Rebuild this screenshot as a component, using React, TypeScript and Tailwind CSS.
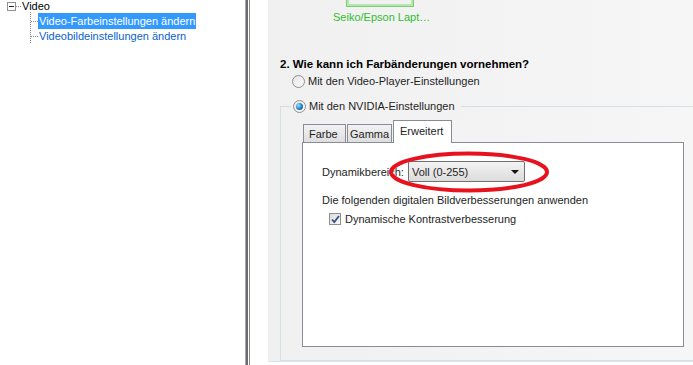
const FONT = "font-['Liberation_Sans',Arial,sans-serif]";

function Radio({ checked }: { checked?: boolean }) {
  return (
    <span className="flex h-[13px] w-[13px] shrink-0 items-center justify-center rounded-full border border-[#8e8f8f] bg-gradient-to-br from-[#e6e6e6] to-[#fbfbfb]">
      {checked && (
        <span className="h-[7px] w-[7px] rounded-full bg-[radial-gradient(circle_at_35%_35%,#9ee0ff,#1b7fc4_55%,#0c4a80)]" />
      )}
    </span>
  );
}

function TreePane() {
  return (
    <div className="relative w-[245px] shrink-0 bg-white">
      <div className="flex h-[12px] items-center pl-[7px]">
        <span className="flex h-[9px] w-[9px] items-center justify-center border border-[#919191] bg-white">
          <span className="h-px w-[5px] bg-[#222]" />
        </span>
        <span className="w-[5px] border-t border-dotted border-[#888]" />
        <span className="ml-[1px] text-black">Video</span>
      </div>
      <div className="ml-[30px] flex">
        <div className="w-[8px] border-l border-dotted border-[#888]">
          <div className="mt-[9px] h-[15px] border-t border-dotted border-[#888]" />
          <div className="h-px border-t border-dotted border-[#888]" />
        </div>
        <div className="flex flex-col">
          <span className="mt-[1px] flex h-[16px] items-center bg-[#3399ff] px-[1px] text-white">Video-Farbeinstellungen ändern</span>
          <span className="px-[1px] text-[#0a5fc9]">Videobildeinstellungen ändern</span>
        </div>
      </div>
    </div>
  );
}

function TabPanel() {
  return (
    <div className="ml-[21px] mt-[13px] w-[382px]">
      <div className="flex h-[22px] items-end pl-px">
        <div className="flex h-[18px] w-[43px] items-center border border-b-0 border-[#898c95] bg-gradient-to-b from-[#f2f2f2] to-[#dedede] pl-[5px]">Farbe</div>
        <div className="ml-px flex h-[18px] w-[45px] items-center border border-b-0 border-[#898c95] bg-gradient-to-b from-[#f2f2f2] to-[#dedede] pl-[2px]">Gamma</div>
        <div className="relative z-10 -mb-px ml-px flex h-[23px] w-[59px] items-start border border-b-0 border-[#898c95] bg-white pl-[6px] pt-[3px]">Erweitert</div>
      </div>
      <div className="relative h-[205px] border border-[#898c95] bg-white pl-[19px]">
        <div className="mt-[18px] flex items-center">
          <span className="w-[86px]">Dynamikbereich:</span>
          <div className="flex h-[21px] w-[117px] items-center justify-between rounded-[2px] border border-[#707070] bg-gradient-to-b from-[#f3f3f3] to-[#dcdcdc] pl-[3px] pr-[5px]">
            <span>Voll (0-255)</span>
            <svg width="8" height="4" viewBox="0 0 8 4"><path d="M0 0h8L4 4z" fill="#111" /></svg>
          </div>
        </div>
        <div className="mt-[11px]">Die folgenden digitalen Bildverbesserungen anwenden</div>
        <div className="ml-[7px] mt-[5px] flex items-center gap-[4px]">
          <span className="flex h-[12px] w-[12px] items-center justify-center border border-[#8e8f8f] bg-gradient-to-br from-[#dcdcdc] to-[#f8f8f8]">
            <svg width="9" height="9" viewBox="0 0 9 9"><path d="M1 4.5l2.3 2.6L8 1" fill="none" stroke="#3c4f8c" strokeWidth="1.8" /></svg>
          </span>
          <span>Dynamische Kontrastverbesserung</span>
        </div>
        <svg className="absolute left-[85px] top-[8px]" width="162" height="42" viewBox="0 0 162 42">
          <ellipse cx="81" cy="21" rx="78" ry="18.5" fill="none" stroke="#e8121e" strokeWidth="4" />
        </svg>
      </div>
    </div>
  );
}

export default function App() {
  return (
    <div className={`flex h-[365px] w-[693px] overflow-hidden bg-white text-[11px] leading-[14px] text-[#1e1e1e] ${FONT}`}>
      <TreePane />
      <div className="flex w-[5px] shrink-0">
        <div className="w-px bg-[#a3a3bd]" />
        <div className="w-[2px] bg-[#6b6b6b]" />
        <div className="w-px bg-white" />
        <div className="w-px bg-[#8a8a8a]" />
      </div>
      <div className="w-[18px] shrink-0 bg-white" />
      <div className="h-[362px] flex-1 border-b border-[#dde3ea] bg-gradient-to-r from-[#f0f0f0] to-[#f6f6f6] pl-[12px]">
        <div className="ml-[67px] h-[6px] w-[66px] border-x-2 border-b-2 border-[#b8e6b0] outline outline-1 outline-[#7ccf70]" />
        <div className="ml-[53px] mt-[4px] text-[#2fbf2f]">Seiko/Epson Lapt…</div>
        <div className="mt-[33px] text-[11.5px] font-bold text-black">2. Wie kann ich Farbänderungen vornehmen?</div>
        <div className="ml-[12px] mt-[3px] flex items-center gap-[3px]">
          <Radio />
          <span>Mit den Video-Player-Einstellungen</span>
        </div>
        <div className="relative mt-[18px] h-[255px] border-y border-l border-[#d5dfe5]">
          <div className="absolute -top-[8px] left-[10px] flex items-center gap-[3px] bg-[#f2f2f2] pr-[6px] pl-[2px]">
            <Radio checked />
            <span>Mit den NVIDIA-Einstellungen</span>
          </div>
          <TabPanel />
        </div>
      </div>
    </div>
  );
}
